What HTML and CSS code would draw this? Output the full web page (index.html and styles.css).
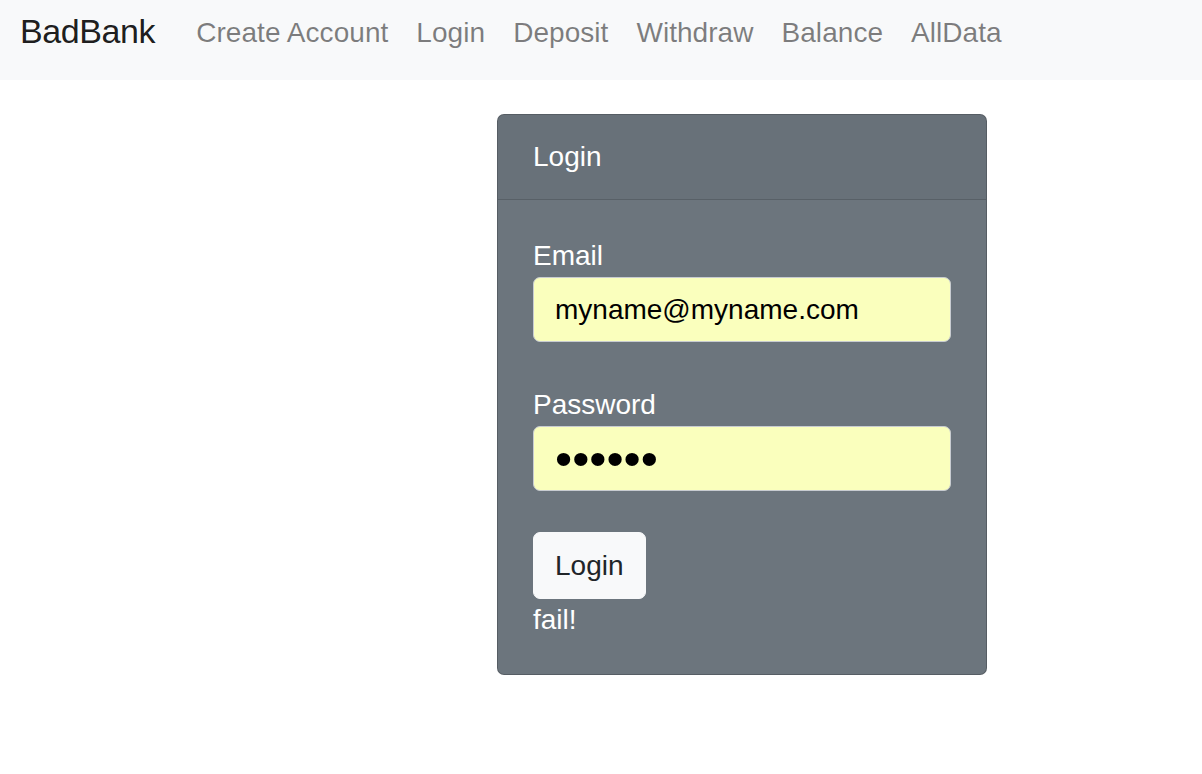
FILE: index.html
```html
<!DOCTYPE html>
<html lang="en">
<head>
<meta charset="utf-8">
<title>BadBank</title>
<link rel="stylesheet" href="styles.css">
</head>
<body>
<nav class="navbar">
  <a class="brand" href="#">BadBank</a>
  <ul class="nav">
    <li><a class="nav-link" href="#">Create Account</a></li>
    <li><a class="nav-link" href="#">Login</a></li>
    <li><a class="nav-link" href="#">Deposit</a></li>
    <li><a class="nav-link" href="#">Withdraw</a></li>
    <li><a class="nav-link" href="#">Balance</a></li>
    <li><a class="nav-link" href="#">AllData</a></li>
  </ul>
</nav>
<main class="main">
  <div class="card">
    <div class="card-header">Login</div>
    <div class="card-body">
      Email<br>
      <input class="form-control" type="input" value="myname@myname.com"><br>
      Password<br>
      <input class="form-control pw" type="password" value="secret"><br>
      <button class="btn" type="button">Login</button><br>
      fail!
    </div>
  </div>
</main>
</body>
</html>
```

FILE: styles.css
```css
* { box-sizing: border-box; }
html, body { margin: 0; padding: 0; }
body {
  font-family: "Liberation Sans", Arial, sans-serif;
  font-size: 28px;
  line-height: 1.5;
  color: #212529;
  background: #fff;
}
.navbar {
  display: flex;
  align-items: center;
  height: 80px;
  padding: 0 21px 15px 20px;
  background: #f8f9fa;
}
.brand {
  font-size: 34px;
  letter-spacing: -0.4px;
  color: rgba(0,0,0,.9);
  text-decoration: none;
  margin-right: 27px;
  line-height: 1.5;
  padding-bottom: 2px;
}
.nav {
  display: flex;
  list-style: none;
  margin: 0;
  padding: 0;
}
.nav-link {
  display: block;
  padding: 0 14px;
  color: rgba(0,0,0,.5);
  text-decoration: none;
  line-height: 1.5;
  letter-spacing: 0.05px;
}
.main {
  padding: 34px 0 0 497px;
}
.card {
  width: 490px;
  background: #6c757d;
  color: #fff;
  border: 1px solid rgba(0,0,0,.2);
  border-radius: 7px;
  overflow: hidden;
}
.card-header {
  padding: 21px 35px;
  background: rgba(0,0,0,.03);
  border-bottom: 1px solid rgba(0,0,0,.15);
}
.card-body {
  padding: 35px 35px 33px;
}
.form-control {
  display: block;
  width: 100%;
  height: 65px;
  padding: 10.5px 21px;
  font-family: "Liberation Sans", Arial, sans-serif;
  font-size: 28px;
  line-height: 1.5;
  color: #000;
  background: #faffbd;
  border: 1px solid #c8ccd1;
  border-radius: 7px;
  outline: none;
}
.form-control.pw {
  font-size: 49px;
  letter-spacing: 0;
  padding-top: 0;
  padding-bottom: 0;
}
.btn {
  display: inline-block;
  height: 67px;
  margin-top: -1px;
  padding: 10.5px 21px;
  font-family: "Liberation Sans", Arial, sans-serif;
  font-size: 28px;
  line-height: 1.5;
  color: #212529;
  background: #f8f9fa;
  border: 1px solid #f8f9fa;
  border-radius: 7px;
  vertical-align: top;
}
```
